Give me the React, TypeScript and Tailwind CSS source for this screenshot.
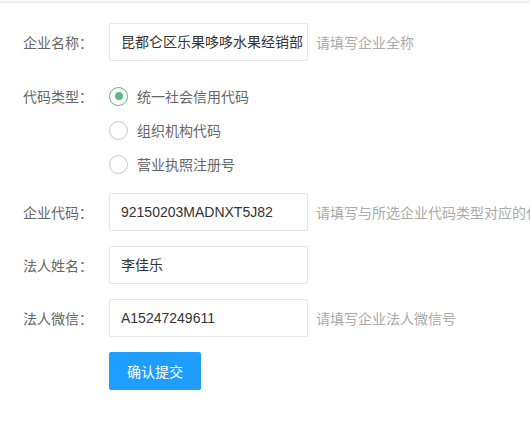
const font = { fontFamily: '"Microsoft YaHei", "Noto Sans CJK SC", sans-serif' };

const codeTypes = ["统一社会信用代码", "组织机构代码", "营业执照注册号"];

function Label({ children }: { children: React.ReactNode }) {
  return <div className="w-[86px] shrink-0 text-[14px] text-[#666]">{children}</div>;
}

function Field({ label, value, hint }: { label: string; value: string; hint?: string }) {
  return (
    <div className="flex items-center h-[38px] whitespace-nowrap">
      <Label>{label}</Label>
      <div className="w-[199px] h-[38px] shrink-0 border border-[#e6e6e6] rounded-[2px] bg-white pl-[11px] flex items-center text-[14px] text-[#333] font-['Liberation_Sans','Noto_Sans_CJK_SC',sans-serif]">
        {value}
      </div>
      {hint && <div className="ml-[8px] text-[14px] text-[#aaa]">{hint}</div>}
    </div>
  );
}

function Radio({ text, checked }: { text: string; checked?: boolean }) {
  return (
    <div className="flex items-center h-[34px]">
      <span
        className={`w-[19px] h-[19px] rounded-full border-[1.5px] flex items-center justify-center ${
          checked ? "border-[#5FB878]" : "border-[#c9c9c9]"
        }`}
      >
        {checked && <span className="w-[8px] h-[8px] rounded-full bg-[#5FB878]" />}
      </span>
      <span className="ml-[9px] text-[14px] text-[#666]">{text}</span>
    </div>
  );
}

export default function App() {
  return (
    <div className="w-[530px] h-[430px] bg-white overflow-hidden" style={font}>
      <div className="h-[3px] bg-[#f7f7f7] border-b border-[#e8e8e8]" />
      <div className="pl-[23px] pt-[20px]">
        <Field label="企业名称：" value="昆都仑区乐果哆哆水果经销部" hint="请填写企业全称" />

        <div className="flex mt-[18px]">
          <div className="h-[34px] flex items-center">
            <Label>代码类型：</Label>
          </div>
          <div className="flex flex-col">
            {codeTypes.map((t, i) => (
              <Radio key={t} text={t} checked={i === 0} />
            ))}
          </div>
        </div>

        <div className="mt-[12px] flex flex-col gap-[15px]">
          <Field label="企业代码：" value="92150203MADNXT5J82" hint="请填写与所选企业代码类型对应的代码" />
          <Field label="法人姓名：" value="李佳乐" />
          <Field label="法人微信：" value="A15247249611" hint="请填写企业法人微信号" />
          <div className="pl-[86px]">
            <button className="h-[38px] px-[18px] rounded-[2px] bg-[#1E9FFF] text-white text-[14px]">
              确认提交
            </button>
          </div>
        </div>
      </div>
    </div>
  );
}
